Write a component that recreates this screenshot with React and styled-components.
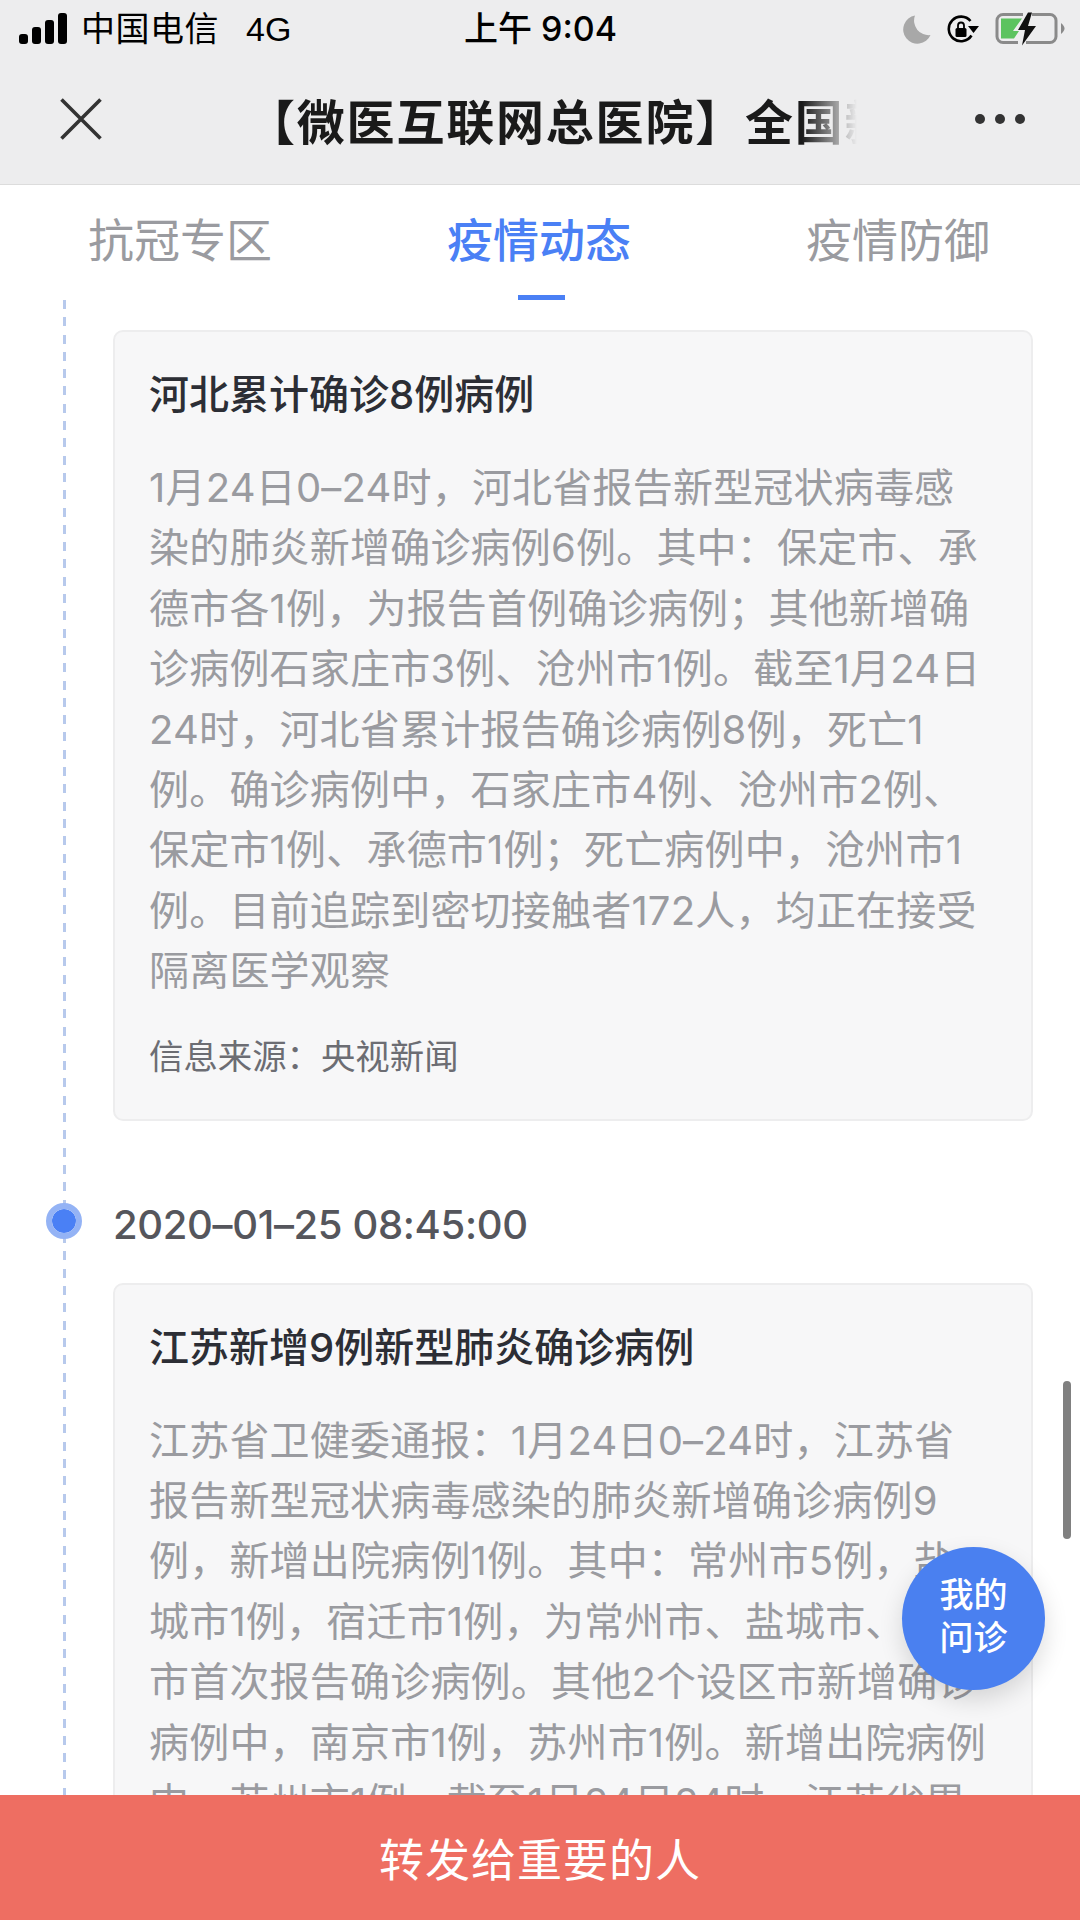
import React from "react";
import styled, { createGlobalStyle } from "styled-components";

const cards = [
  {
    title: "河北累计确诊8例病例",
    lines: [
      "1月24日0–24时，河北省报告新型冠状病毒感",
      "染的肺炎新增确诊病例6例。其中：保定市、承",
      "德市各1例，为报告首例确诊病例；其他新增确",
      "诊病例石家庄市3例、沧州市1例。截至1月24日",
      "24时，河北省累计报告确诊病例8例，死亡1",
      "例。确诊病例中，石家庄市4例、沧州市2例、",
      "保定市1例、承德市1例；死亡病例中，沧州市1",
      "例。目前追踪到密切接触者172人，均正在接受",
      "隔离医学观察",
    ],
    source: "信息来源：央视新闻",
  },
  {
    date: "2020–01–25 08:45:00",
    title: "江苏新增9例新型肺炎确诊病例",
    lines: [
      "江苏省卫健委通报：1月24日0–24时，江苏省",
      "报告新型冠状病毒感染的肺炎新增确诊病例9",
      "例，新增出院病例1例。其中：常州市5例，盐",
      "城市1例，宿迁市1例，为常州市、盐城市、宿迁",
      "市首次报告确诊病例。其他2个设区市新增确诊",
      "病例中，南京市1例，苏州市1例。新增出院病例",
      "中，苏州市1例。截至1月24日24时，江苏省累",
    ],
  },
];

const tabs = ["抗冠专区", "疫情动态", "疫情防御"];

const App = () => {
  return (
    <Page>
      <GlobalStyle />
      <StatusBar>
        <StatusLeft>
          <Signal width="50" height="32" viewBox="0 0 50 32">
            {[0, 1, 2, 3].map((i) => (
              <rect key={i} x={i * 13} y={21 - i * 7} width="9" height={10 + i * 7} rx="3" fill="#000" />
            ))}
          </Signal>
          <Carrier>中国电信</Carrier>
          <Network>4G</Network>
        </StatusLeft>
        <Clock>上午 9:04</Clock>
        <StatusRight>
          <svg width="28" height="29" viewBox="0 0 28 29">
            <path d="M12 0.5 A14.2 14.2 0 1 0 27.5 20 A14.5 14.5 0 0 1 12 0.5Z" fill="#a8a8a8" />
          </svg>
          <svg width="32" height="28" viewBox="0 0 32 28">
            <path d="M24.5 20.5 A12.3 12.3 0 1 1 23.5 6" fill="none" stroke="#000" strokeWidth="2.6" />
            <path d="M21 11 L32 11 L26.5 18Z" fill="#000" />
            <rect x="8.5" y="13" width="11" height="9" rx="1.5" fill="#000" />
            <path d="M11 13 V10.5 A3 3 0 0 1 17 10.5 V13" fill="none" stroke="#000" strokeWidth="1.8" />
          </svg>
          <svg width="70" height="34" viewBox="0 0 70 34">
            <path d="M28 2.5 H8 A6 6 0 0 0 2 8.5 V24.5 A6 6 0 0 0 8 30.5 H23" fill="none" stroke="#8a8a8a" strokeWidth="3" />
            <path d="M37 2.5 H55 A6 6 0 0 1 61 8.5 V24.5 A6 6 0 0 1 55 30.5 H31" fill="none" stroke="#8a8a8a" strokeWidth="3" />
            <path d="M6 6.5 H27 L18 19 H24 L19 26.5 H6Z" fill="#5cc35f" />
            <path d="M66 11 C68.5 13 69.5 15 69.5 16.5 C69.5 18 68.5 20 66 22Z" fill="#8a8a8a" />
            <path d="M33 0.5 L23 18 H30 L27 33.5 L41 14 H33 L37 0.5Z" fill="#111" />
          </svg>
        </StatusRight>
      </StatusBar>
      <NavBar>
        <svg width="42" height="42" viewBox="0 0 42 42">
          <path d="M1.5 1.5 L40.5 40.5 M40.5 1.5 L1.5 40.5" stroke="#333" strokeWidth="3.6" fill="none" />
        </svg>
        <NavTitle>
          <NavTitleText>【微医互联网总医院】全国新型肺炎实时动态</NavTitleText>
        </NavTitle>
        <Dots>
          <Dot />
          <Dot />
          <Dot />
        </Dots>
      </NavBar>
      <Tabs>
        {tabs.map((t, i) => (
          <Tab key={t} $active={i === 1}>
            {t}
          </Tab>
        ))}
      </Tabs>
      <Timeline>
        {cards.map((c) => (
          <Entry key={c.title}>
            {c.date && (
              <DateRow>
                <Marker />
                {c.date}
              </DateRow>
            )}
            <Card>
              <CardTitle>{c.title}</CardTitle>
              <CardBody>
                {c.lines.map((l) => (
                  <Line key={l}>{l}</Line>
                ))}
              </CardBody>
              {c.source && <Source>{c.source}</Source>}
            </Card>
          </Entry>
        ))}
      </Timeline>
      <Scrollbar />
      <Fab>
        我的
        <br />
        问诊
      </Fab>
      <ShareBar>转发给重要的人</ShareBar>
    </Page>
  );
};

const GlobalStyle = createGlobalStyle`
  html, body {
    margin: 0;
    padding: 0;
    background: #fff;
  }
  * {
    box-sizing: border-box;
  }
`;

const Page = styled.div`
  position: relative;
  display: flex;
  flex-direction: column;
  width: 1080px;
  height: 1920px;
  overflow: hidden;
  background: #fff;
  font-family: Inter, "Noto Sans CJK SC", "Liberation Sans", sans-serif;
`;

const StatusBar = styled.div`
  display: flex;
  align-items: center;
  justify-content: space-between;
  height: 60px;
  padding: 0 15px 2px 19px;
  background: #ededee;
  color: #000;
`;

const StatusLeft = styled.div`
  display: flex;
  align-items: center;
  width: 300px;
`;

const Signal = styled.svg`
  margin-right: 12px;
`;

const Carrier = styled.span`
  font-size: 34px;
  line-height: 40px;
  letter-spacing: 0.5px;
`;

const Network = styled.span`
  margin-left: 27px;
  font-family: "Liberation Sans", sans-serif;
  font-size: 34px;
`;

const Clock = styled.div`
  margin-left: -3px;
  font-size: 34px;
  font-weight: 500;
  line-height: 40px;
`;

const StatusRight = styled.div`
  display: flex;
  align-items: center;
  justify-content: flex-end;
  gap: 16px;
  width: 300px;
`;

const NavBar = styled.div`
  display: flex;
  align-items: center;
  height: 125px;
  padding: 0 55px 6px 60px;
  background: #ededee;
  border-bottom: 1px solid #dcdcdc;
`;

const NavTitle = styled.div`
  width: 610px;
  margin-left: 145px;
  overflow: hidden;
  -webkit-mask-image: linear-gradient(to right, #000 91%, transparent 100%);
  mask-image: linear-gradient(to right, #000 91%, transparent 100%);
`;

const NavTitleText = styled.div`
  font-size: 48px;
  font-weight: 700;
  letter-spacing: 1.8px;
  white-space: nowrap;
  color: #1a1a1a;
`;

const Dots = styled.div`
  display: flex;
  gap: 10px;
  margin-left: auto;
`;

const Dot = styled.span`
  width: 10px;
  height: 10px;
  border-radius: 50%;
  background: #333;
`;

const Tabs = styled.div`
  display: flex;
  justify-content: space-between;
  height: 115px;
  padding: 0 90px 0 88px;
`;

const Tab = styled.div`
  position: relative;
  padding-top: 25px;
  font-size: 46px;
  line-height: 60px;
  font-weight: ${(p) => (p.$active ? 500 : 400)};
  color: ${(p) => (p.$active ? "#4a80f5" : "#9a9ba0")};

  &::after {
    content: "";
    display: ${(p) => (p.$active ? "block" : "none")};
    position: absolute;
    left: 50%;
    bottom: 0;
    width: 47px;
    height: 5px;
    margin-left: -21px;
    background: #4a80f5;
  }
`;

const Timeline = styled.div`
  position: relative;
  flex: 1;
  min-height: 0;
  overflow: hidden;
  padding: 30px 47px 0 113px;

  &::before {
    content: "";
    position: absolute;
    left: 63px;
    top: 0;
    bottom: 0;
    width: 3px;
    background: repeating-linear-gradient(to bottom, #b7c9ec 0, #b7c9ec 9px, transparent 9px, transparent 17.3px);
  }
`;

const Entry = styled.div`
  position: relative;
  margin-bottom: 77px;
`;

const DateRow = styled.div`
  position: relative;
  font-size: 40px;
  font-weight: 500;
  letter-spacing: -0.35px;
  line-height: 54px;
  color: #55565c;
  margin-bottom: 31px;
`;

const Marker = styled.span`
  position: absolute;
  left: -67px;
  top: 5px;
  width: 36px;
  height: 36px;
  border-radius: 50%;
  background: #4a80f5;
  border: 6px solid #94b3f5;
  background-clip: padding-box;
`;

const Card = styled.div`
  padding: 33px 36px 37px 34px;
  background: #f7f7f8;
  border: 2px solid #ededee;
  border-radius: 10px;
`;

const CardTitle = styled.div`
  font-size: 40px;
  font-weight: 500;
  line-height: 60px;
  color: #2c2e35;
  margin-bottom: 33px;
`;

const CardBody = styled.div`
  font-size: 40px;
  letter-spacing: 0.2px;
  line-height: 60.4px;
  color: #9a9ba0;
`;

const Line = styled.div`
  white-space: nowrap;
`;

const Source = styled.div`
  margin-top: 30px;
  font-size: 34.4px;
  line-height: 50px;
  color: #6c6d73;
`;

const Scrollbar = styled.div`
  position: absolute;
  left: 1063px;
  top: 1381px;
  width: 8px;
  height: 158px;
  border-radius: 4px;
  background: #808080;
`;

const Fab = styled.div`
  position: absolute;
  left: 902px;
  top: 1547px;
  display: flex;
  align-items: center;
  justify-content: center;
  width: 143px;
  height: 143px;
  padding-bottom: 5px;
  border-radius: 50%;
  background: #4a80f0;
  box-shadow: 0 10px 24px rgba(0, 0, 0, 0.14);
  color: #fff;
  font-size: 34px;
  font-weight: 500;
  line-height: 43px;
  text-align: center;
`;

const ShareBar = styled.div`
  display: flex;
  align-items: center;
  justify-content: center;
  position: relative;
  flex-shrink: 0;
  height: 125px;
  background: #ee6e62;
  color: #fff;
  font-size: 45px;
  letter-spacing: 1px;
`;

export default App;
